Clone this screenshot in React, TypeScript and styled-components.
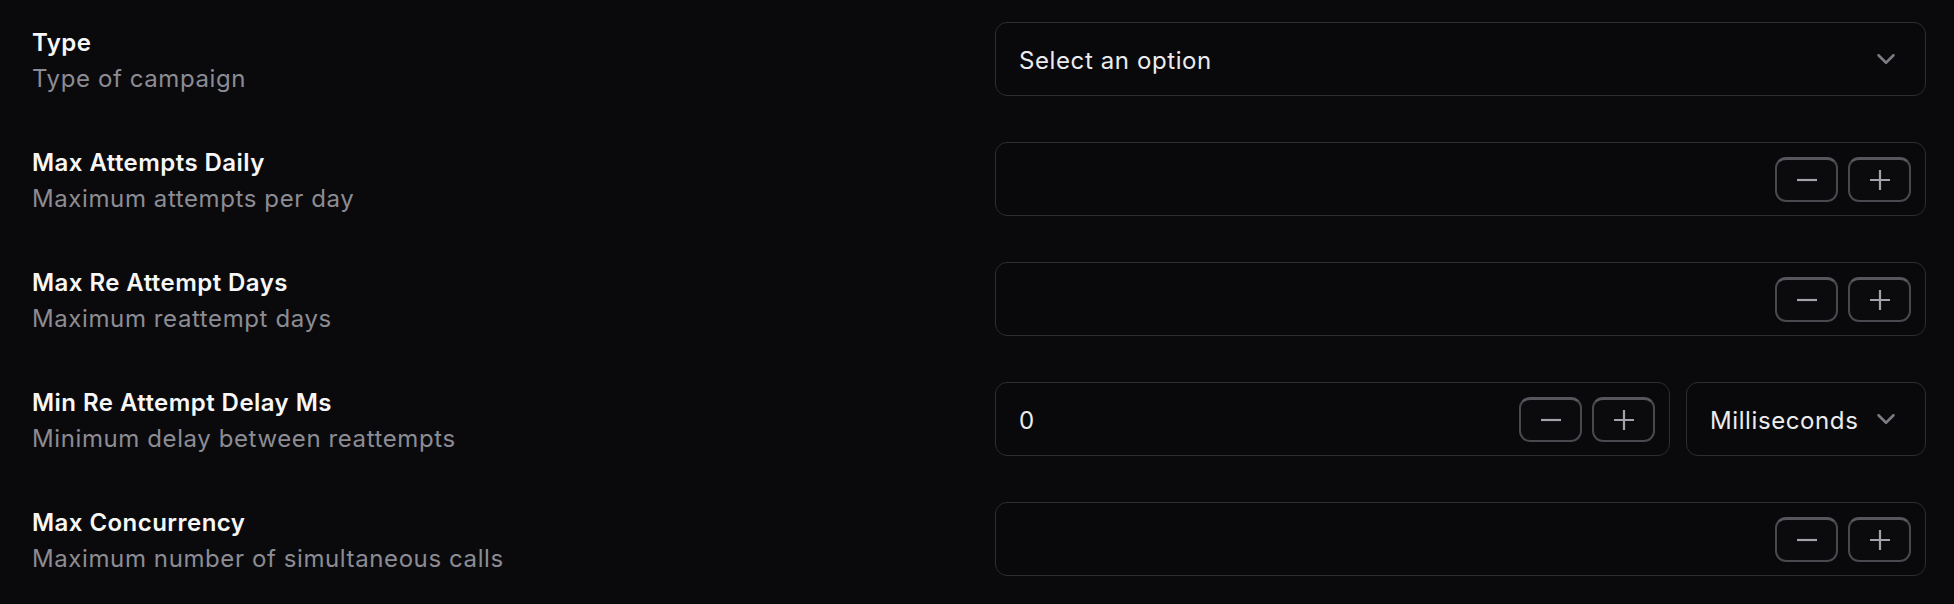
import React from "react";
import styled, { createGlobalStyle } from "styled-components";

const GlobalStyle = createGlobalStyle`
    html, body {
        margin: 0;
        padding: 0;
        background: #0a0a0c;
    }
    body {
        font-family: Inter, "Noto Sans", sans-serif;
        color: #f4f4f5;
    }
`;

const Page = styled.div`
    display: flex;
    flex-direction: column;
    gap: 46px;
    padding: 22px 28px 0 32px;
    min-height: 604px;
    box-sizing: border-box;
    background: #0a0a0c;
`;

const Row = styled.div`
    display: grid;
    grid-template-columns: 1fr 1fr;
    grid-auto-rows: 74px;
    column-gap: 32px;
    align-items: start;
`;

const Label = styled.div`
    display: flex;
    flex-direction: column;
    padding-top: 3px;
`;

const Title = styled.div`
    font-size: 24px;
    line-height: 36px;
    font-weight: 600;
    letter-spacing: 0.45px;
    color: #f7f7f8;
`;

const Desc = styled.div`
    font-size: 24px;
    line-height: 36px;
    font-weight: 400;
    letter-spacing: 0.6px;
    color: #8c8c94;
`;

const Controls = styled.div`
    display: flex;
    gap: 16px;
`;

const Field = styled.div<{ $width?: number }>`
    display: flex;
    align-items: center;
    box-sizing: border-box;
    height: 74px;
    ${(p) => (p.$width ? `width: ${p.$width}px; flex: none;` : "flex: 1;")}
    min-width: 0;
    border: 1.5px solid #2d2d32;
    border-radius: 12px;
    background: #09090b;
    padding: 0 14px 0 23px;
`;

const Value = styled.span`
    flex: 1;
    font-size: 24px;
    letter-spacing: 0.6px;
    color: #ececee;
    white-space: nowrap;
    padding-top: 2px;
`;

const SelectField = styled(Field)`
    padding-right: 24px;
`;

const Chevron = styled.svg`
    flex: none;
    color: #7c7c84;
`;

const Stepper = styled.div`
    display: flex;
    gap: 10px;
`;

const StepButton = styled.button`
    display: flex;
    align-items: center;
    justify-content: center;
    width: 63px;
    height: 45px;
    box-sizing: border-box;
    padding: 0;
    border: 2px solid #48484e;
    border-top: 3px solid #56565c;
    border-radius: 11px;
    background: #0b0b0d;
    color: #a2a2aa;
    cursor: pointer;
`;

function ChevronDown() {
    return (
        <Chevron width="30" height="30" viewBox="0 0 24 24" fill="none" stroke="currentColor" strokeWidth="2" strokeLinecap="round" strokeLinejoin="round">
            <path d="m6 9 6 6 6-6" />
        </Chevron>
    );
}

function Minus() {
    return (
        <svg width="20" height="20" viewBox="0 0 20 20" fill="none" stroke="currentColor" strokeWidth="2.2">
            <path d="M0 10h20" />
        </svg>
    );
}

function Plus() {
    return (
        <svg width="20" height="20" viewBox="0 0 20 20" fill="none" stroke="currentColor" strokeWidth="2.2">
            <path d="M0 10h20M10 0v20" />
        </svg>
    );
}

function NumberInput({ value }: { value?: string }) {
    return (
        <Field>
            <Value>{value ?? ""}</Value>
            <Stepper>
                <StepButton><Minus /></StepButton>
                <StepButton><Plus /></StepButton>
            </Stepper>
        </Field>
    );
}

function Select({ value, width }: { value: string; width?: number }) {
    return (
        <SelectField $width={width}>
            <Value>{value}</Value>
            <ChevronDown />
        </SelectField>
    );
}

const fields = [
    { title: "Max Attempts Daily", desc: "Maximum attempts per day" },
    { title: "Max Re Attempt Days", desc: "Maximum reattempt days" },
];

export default function App() {
    return (
        <>
            <GlobalStyle />
            <Page>
                <Row>
                    <Label>
                        <Title>Type</Title>
                        <Desc>Type of campaign</Desc>
                    </Label>
                    <Select value="Select an option" />
                </Row>
                {fields.map((f) => (
                    <Row key={f.title}>
                        <Label>
                            <Title>{f.title}</Title>
                            <Desc>{f.desc}</Desc>
                        </Label>
                        <NumberInput />
                    </Row>
                ))}
                <Row>
                    <Label>
                        <Title>Min Re Attempt Delay Ms</Title>
                        <Desc>Minimum delay between reattempts</Desc>
                    </Label>
                    <Controls>
                        <NumberInput value="0" />
                        <Select value="Milliseconds" width={240} />
                    </Controls>
                </Row>
                <Row>
                    <Label>
                        <Title>Max Concurrency</Title>
                        <Desc>Maximum number of simultaneous calls</Desc>
                    </Label>
                    <NumberInput />
                </Row>
            </Page>
        </>
    );
}
